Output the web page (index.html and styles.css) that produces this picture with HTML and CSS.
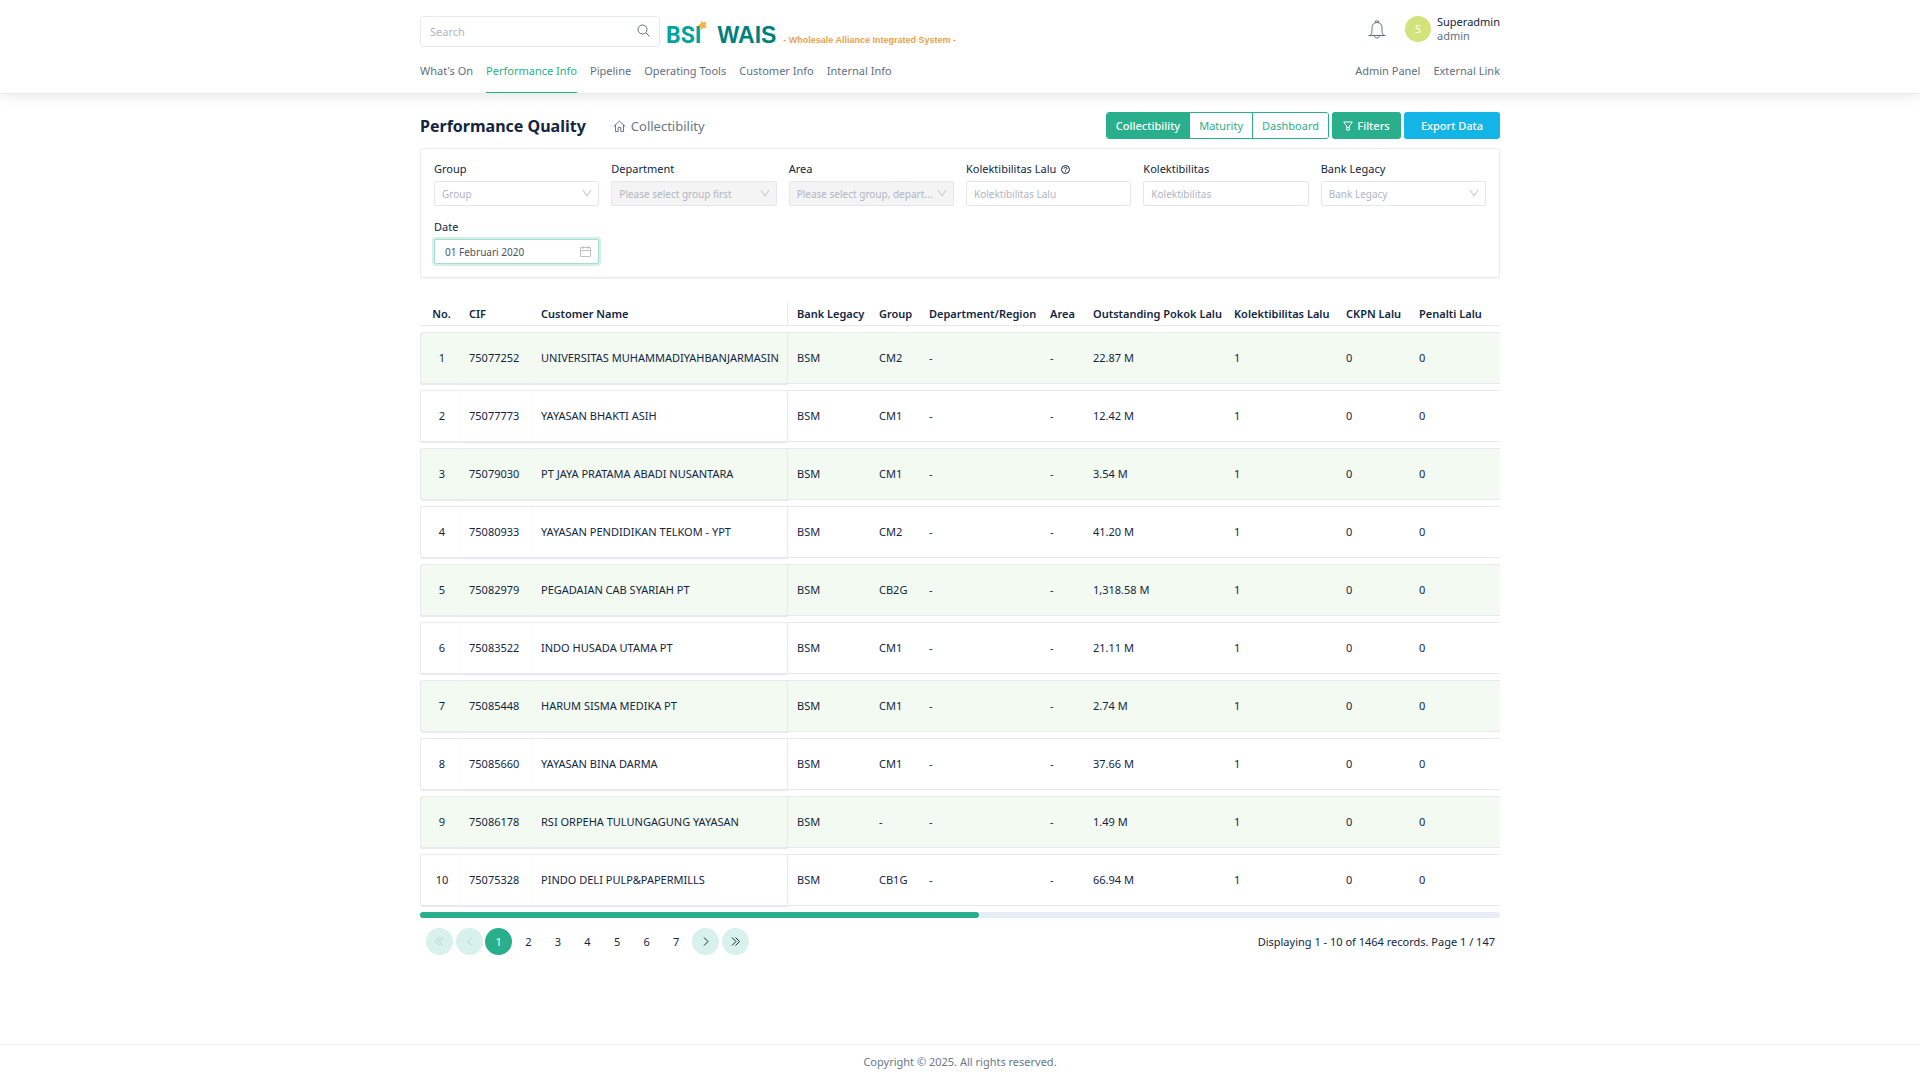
FILE: index.html
```html
<!DOCTYPE html>
<html lang="id">
<head>
<meta charset="utf-8">
<meta name="viewport" content="width=device-width, initial-scale=1">
<title>Performance Quality</title>
<link rel="stylesheet" href="styles.css">
</head>
<body>
<svg class="sprite" aria-hidden="true">
  <symbol id="chevron" viewBox="0 0 12 12"><path d="M2 3 6 9l4-6" fill="none" stroke="currentColor"/></symbol>
</svg>
<header class="header">
  <div class="container">
    <div class="topbar">
      <form class="search">
        <input class="search-input" type="search" placeholder="Search" aria-label="Search">
        <button class="search-button" type="button" aria-label="Submit search">
          <svg width="13" height="13" viewBox="0 0 13 13" fill="none" stroke="currentColor"><circle cx="5.500" cy="5.500" r="4.500"/><path d="m9 9 3.500 3.500"/></svg>
        </button>
      </form>
      <a class="logo" href="#">
        <span class="logo-bsi">BSI<svg class="logo-star" width="9" height="9" viewBox="0 0 9 9"><path fill="#fbb03b" d="m3 0 2.200 1.500L8.500.700 7.500 4 8.700 7 5.500 6.800 3 9 2.300 5.800 0 4l2.600-1z"/></svg></span>
        <span class="logo-wais">WAIS</span>
        <span class="logo-tagline">- Wholesale Alliance Integrated System -</span>
      </a>
      <div class="account">
        <button class="bell" type="button" aria-label="Notifications">
          <svg width="18" height="19" viewBox="0 0 18 19" fill="none" stroke="currentColor"><path d="M.500 15.500h17M2 15.500c1.500-1 2-2.500 2-5V7.500C4 4.500 6 2.500 9 2.500s5 2 5 5v3c0 2.500.500 4 2 5M7.500 2.500V1h3v1.500M6.500 16c.300 1.500 1.200 2 2.500 2s2.200-.500 2.500-2"/></svg>
        </button>
        <span class="avatar">S</span>
        <div class="user"><div class="user-name">Superadmin</div><div>admin</div></div>
      </div>
    </div>
    <nav class="nav">
      <a href="#">What's On</a>
      <a class="active" href="#">Performance Info</a>
      <a href="#">Pipeline</a>
      <a href="#">Operating Tools</a>
      <a href="#">Customer Info</a>
      <a href="#">Internal Info</a>
      <a class="push" href="#">Admin Panel</a>
      <a href="#">External Link</a>
    </nav>
  </div>
</header>

<main class="main container">
  <div class="heading">
    <h1>Performance Quality</h1>
    <a class="crumb" href="#"><svg width="13" height="12" viewBox="0 0 13 12" fill="none" stroke="currentColor"><path d="M.700 6.500 6.500 1l5.800 5.500M2.500 5v6.500h2.700v-4h2.600v4h2.700V5"/></svg>Collectibility</a>
    <div class="actions">
      <div class="segmented">
        <button class="segment selected" type="button">Collectibility</button>
        <button class="segment" type="button">Maturity</button>
        <button class="segment" type="button">Dashboard</button>
      </div>
      <button class="button filters" type="button"><svg width="10" height="10" viewBox="0 0 10 10" fill="none" stroke="currentColor"><path d="M.700 1h8.600L6.300 5.200v3.900H3.700V5.200z"/><path d="M3.700 6.500h2.600"/></svg>Filters</button>
      <button class="button export" type="button">Export Data</button>
    </div>
  </div>

  <form class="panel">
    <div class="field">
      <label for="group">Group</label>
      <div class="control"><select id="group"><option>Group</option></select><svg class="caret"><use href="#chevron"/></svg></div>
    </div>
    <div class="field">
      <label for="department">Department</label>
      <div class="control"><select id="department" disabled><option>Please select group first</option></select><svg class="caret"><use href="#chevron"/></svg></div>
    </div>
    <div class="field">
      <label for="area">Area</label>
      <div class="control"><select id="area" disabled><option>Please select group, depart...</option></select><svg class="caret"><use href="#chevron"/></svg></div>
    </div>
    <div class="field">
      <label for="kol-lalu">Kolektibilitas Lalu <svg class="help" width="9" height="9" viewBox="0 0 9 9" fill="none" stroke="currentColor"><circle cx="4.500" cy="4.500" r="4"/><path d="M3 3.500C3 2 6 2 6 3.500 6 4.500 4.500 4.300 4.500 5.500M4.500 6.300v.900"/></svg></label>
      <div class="control"><input id="kol-lalu" type="text" placeholder="Kolektibilitas Lalu"></div>
    </div>
    <div class="field">
      <label for="kol">Kolektibilitas</label>
      <div class="control"><input id="kol" type="text" placeholder="Kolektibilitas"></div>
    </div>
    <div class="field">
      <label for="legacy">Bank Legacy</label>
      <div class="control"><select id="legacy"><option>Bank Legacy</option></select><svg class="caret"><use href="#chevron"/></svg></div>
    </div>
    <div class="field">
      <label for="date">Date</label>
      <div class="control"><input class="date" id="date" type="text" value="01 Februari 2020"><svg class="calendar" viewBox="0 0 11 11" fill="none" stroke="currentColor"><path d="M.500 1.500h10v9H.500zM.500 4.500h10M3 0v3M8 0v3"/></svg></div>
    </div>
  </form>

  <table class="grid">
    <colgroup><col class="w-no"><col class="w-cif"><col class="w-name"><col class="w-legacy"><col class="w-group"><col class="w-dept"><col class="w-area"><col class="w-out"><col class="w-kol"><col class="w-ckpn"><col></colgroup>
    <thead>
      <tr><th>No.</th><th>CIF</th><th>Customer Name</th><th>Bank Legacy</th><th>Group</th><th>Department/Region</th><th>Area</th><th>Outstanding Pokok Lalu</th><th>Kolektibilitas Lalu</th><th>CKPN Lalu</th><th>Penalti Lalu</th></tr>
    </thead>
    <tbody>
      <tr><td>1</td><td>75077252</td><td>UNIVERSITAS MUHAMMADIYAHBANJARMASIN</td><td>BSM</td><td>CM2</td><td>-</td><td>-</td><td>22.87 M</td><td>1</td><td>0</td><td>0</td></tr>
      <tr><td>2</td><td>75077773</td><td>YAYASAN BHAKTI ASIH</td><td>BSM</td><td>CM1</td><td>-</td><td>-</td><td>12.42 M</td><td>1</td><td>0</td><td>0</td></tr>
      <tr><td>3</td><td>75079030</td><td>PT JAYA PRATAMA ABADI NUSANTARA</td><td>BSM</td><td>CM1</td><td>-</td><td>-</td><td>3.54 M</td><td>1</td><td>0</td><td>0</td></tr>
      <tr><td>4</td><td>75080933</td><td>YAYASAN PENDIDIKAN TELKOM - YPT</td><td>BSM</td><td>CM2</td><td>-</td><td>-</td><td>41.20 M</td><td>1</td><td>0</td><td>0</td></tr>
      <tr><td>5</td><td>75082979</td><td>PEGADAIAN CAB SYARIAH PT</td><td>BSM</td><td>CB2G</td><td>-</td><td>-</td><td>1,318.58 M</td><td>1</td><td>0</td><td>0</td></tr>
      <tr><td>6</td><td>75083522</td><td>INDO HUSADA UTAMA PT</td><td>BSM</td><td>CM1</td><td>-</td><td>-</td><td>21.11 M</td><td>1</td><td>0</td><td>0</td></tr>
      <tr><td>7</td><td>75085448</td><td>HARUM SISMA MEDIKA PT</td><td>BSM</td><td>CM1</td><td>-</td><td>-</td><td>2.74 M</td><td>1</td><td>0</td><td>0</td></tr>
      <tr><td>8</td><td>75085660</td><td>YAYASAN BINA DARMA</td><td>BSM</td><td>CM1</td><td>-</td><td>-</td><td>37.66 M</td><td>1</td><td>0</td><td>0</td></tr>
      <tr><td>9</td><td>75086178</td><td>RSI ORPEHA TULUNGAGUNG YAYASAN</td><td>BSM</td><td>-</td><td>-</td><td>-</td><td>1.49 M</td><td>1</td><td>0</td><td>0</td></tr>
      <tr><td>10</td><td>75075328</td><td>PINDO DELI PULP&amp;PAPERMILLS</td><td>BSM</td><td>CB1G</td><td>-</td><td>-</td><td>66.94 M</td><td>1</td><td>0</td><td>0</td></tr>
    </tbody>
  </table>
  <div class="scroll-track"><div class="scroll-thumb" style="width: 51.75%"></div></div>

  <div class="table-footer">
    <nav class="pages" aria-label="Pagination">
      <button class="page arrow" type="button" disabled aria-label="First"><svg width="9" height="9" viewBox="0 0 9 9" fill="none" stroke="currentColor"><path d="M4.500.500.500 4.500l4 4M8 .500 4 4.500l4 4"/></svg></button>
      <button class="page arrow" type="button" disabled aria-label="Previous"><svg width="9" height="9" viewBox="0 0 9 9" fill="none" stroke="currentColor"><path d="m6.500.500-4 4 4 4"/></svg></button>
      <button class="page current" type="button">1</button>
      <button class="page" type="button">2</button>
      <button class="page" type="button">3</button>
      <button class="page" type="button">4</button>
      <button class="page" type="button">5</button>
      <button class="page" type="button">6</button>
      <button class="page" type="button">7</button>
      <button class="page arrow" type="button" aria-label="Next"><svg width="9" height="9" viewBox="0 0 9 9" fill="none" stroke="currentColor"><path d="m3 .500 4 4-4 4"/></svg></button>
      <button class="page arrow" type="button" aria-label="Last"><svg width="9" height="9" viewBox="0 0 9 9" fill="none" stroke="currentColor"><path d="m1 .500 4 4-4 4M4.500.500l4 4-4 4"/></svg></button>
    </nav>
    <p class="summary">Displaying 1 - 10 of 1464 records. Page 1 / 147</p>
  </div>
</main>
<footer class="footer">Copyright © 2025. All rights reserved.</footer>
</body>
</html>
```
FILE: styles.css
```css
* { box-sizing: border-box; }

body {
  margin: 0;
  min-height: 100vh;
  display: flex;
  flex-direction: column;
  background: #fff;
  color: #12263f;
  font: 11px/14px "Noto Sans", sans-serif;
}

a { color: inherit; text-decoration: none; }
button, input, select { font: inherit; color: inherit; margin: 0; }
button { padding: 0; border: 0; background: none; cursor: pointer; }
svg { display: block; }
.sprite { position: absolute; width: 0; height: 0; }

.container {
  width: 100%;
  max-width: 1104px;
  margin: 0 auto;
  padding: 0 12px;
}

/* Header */
.header { color: #5f6f80; box-shadow: 0 0 14px rgba(0, 0, 0, .12); border-bottom: 1px solid #ececee; }
.topbar { display: flex; align-items: flex-start; padding-top: 16px; height: 50px; }
.search {
  display: flex;
  align-items: center;
  width: 240px;
  height: 31px;
  padding: 0 9px;
  border: 1px solid #e9e9f1;
  border-radius: 3px;
}
.search-input { flex: 1; min-width: 0; padding: 0; border: 0; outline: 0; background: none; appearance: none; }
::placeholder { color: #b1b5c3; opacity: 1; }
.search-button { margin-bottom: 2px; }
.logo { display: flex; align-items: baseline; padding-left: 6px; font-weight: 700; line-height: 38px; }
.logo-bsi { position: relative; margin-right: 16px; color: #00a39d; font-family: Roboto, sans-serif; font-size: 23px; }
.logo-star { position: absolute; top: 4px; right: -5px; }
.logo-wais { margin-right: 7px; color: #00807b; font-family: "Liberation Sans", sans-serif; font-size: 23px; }
.logo-tagline { color: #eaa24a; font-family: "Liberation Sans", sans-serif; font-size: 9px; }
.account { display: flex; align-items: flex-start; margin-left: auto; }
.bell { margin: 4px 19px 0 0; }
.avatar {
  width: 26px;
  height: 26px;
  margin-right: 6px;
  border-radius: 50%;
  background: #d3e37c;
  color: #fff;
  line-height: 25px;
  text-align: center;
}
.user { line-height: 14px; margin-top: -1px; }
.user-name { color: #12263f; }
.nav { display: flex; gap: 13px; height: 43px; }
.nav a { padding-top: 14px; }
.nav .active { color: #2aaf8c; border-bottom: 1px solid #2aaf8c; }
.nav .push { margin-left: auto; }

/* Page heading */
.main { flex: 1; }
.heading { display: flex; align-items: center; margin-top: 18px; height: 27px; }
h1 { margin: 0; font-size: 16px; line-height: 24px; font-weight: 700; }
.crumb { display: flex; align-items: center; gap: 5px; margin-left: 27px; color: #6a7889; font-size: 13px; }
.actions { display: flex; gap: 3px; margin-left: auto; }
.segmented { display: flex; border: 1px solid #2aaf8c; border-radius: 3px; overflow: hidden; }
.segment { height: 25px; padding: 0 9px; color: #2aaf8c; background: #fff; }
.segment + .segment { border-left: 1px solid #2aaf8c; }
.segment.selected { color: #fff; background: #2aaf8c; font-weight: 500; }
.button { height: 27px; border-radius: 3px; color: #fff; font-weight: 500; }
.filters { display: flex; align-items: center; justify-content: center; gap: 4px; width: 69px; background: #2aaf8c; }
.export { width: 96px; background: #12b5e5; }

/* Filter panel */
.panel {
  display: grid;
  grid-template-columns: repeat(6, minmax(0, 1fr));
  column-gap: 12px;
  row-gap: 13px;
  margin-top: 9px;
  padding: 12px 13px 13px;
  border: 1px solid #e9e9f1;
  border-radius: 3px;
  box-shadow: 0 1px 2px rgba(0, 0, 0, .05);
}
.field label { display: flex; align-items: center; gap: 5px; height: 16px; margin-bottom: 4px; }
.control { position: relative; height: 25px; font-size: 10px; }
.control select, .control input {
  display: block;
  width: 100%;
  height: 25px;
  padding: 0 7px;
  border: 1px solid #e6e7ee;
  border-radius: 2px;
  background: #fff;
  color: #b1b5c3;
  appearance: none;
  outline: 0;
}
.control select { padding-right: 16px; }
.control select:disabled { background: #f4f4f4; opacity: 1; }
.control .date { padding: 0 10px; color: #4d5260; border: 1px solid #a5dfcf; box-shadow: 0 0 0 2px #d4efe8; }
.caret, .calendar { position: absolute; color: #c0c0c6; pointer-events: none; }
.caret { right: 6px; top: 6px; width: 12px; height: 12px; }
.calendar { right: 8px; top: 7px; width: 11px; height: 11px; }

/* Records table */
.grid {
  width: 100%;
  margin-top: 18px;
  table-layout: fixed;
  border-collapse: separate;
  border-spacing: 0 6px;
}
.w-no { width: 40px; }
.w-cif { width: 72px; }
.w-name { width: 256px; }
.w-legacy { width: 82px; }
.w-group { width: 50px; }
.w-dept { width: 121px; }
.w-area { width: 43px; }
.w-out { width: 141px; }
.w-kol { width: 112px; }
.w-ckpn { width: 73px; }
th, td { padding: 0 0 0 9px; text-align: left; white-space: nowrap; }
th { height: 24px; font-weight: 600; border-bottom: 1px solid #e9e9f1; }
td { height: 52px; border: 1px solid #e9e9f1; border-width: 1px 0; }
th:first-child, td:first-child { padding: 0 0 0 3px; text-align: center; }
td:first-child { border-left-width: 1px; border-radius: 3px 0 0 3px; }
th:nth-child(3) { border-right: 1px solid #e9e9f1; }
td:nth-child(3) { border-right-width: 1px; }
td:nth-child(-n+3) { box-shadow: 0 1px 1px #e9e8f2; }
tbody tr:nth-child(odd) td { background: #f3faf2; }

.scroll-track { height: 6px; border-radius: 3px; background: #e8ecf5; }
.scroll-thumb { height: 6px; border-radius: 3px; background: #2aaf8c; }

/* Pagination */
.table-footer { display: flex; align-items: center; justify-content: space-between; padding: 10px 5px 10px 6px; }
.pages { display: flex; justify-content: space-between; width: 323px; }
.page { display: flex; align-items: center; justify-content: center; width: 27px; height: 27px; border-radius: 50%; }
.arrow { background: #d8f1ea; }
.arrow:disabled { color: #b9cfd0; }
.page.current { background: #2aaf8c; color: #fff; }
.summary { margin: 0; }

.footer { padding: 10px 0 11px; border-top: 1px solid #ebebee; color: #6a7889; text-align: center; }
```
